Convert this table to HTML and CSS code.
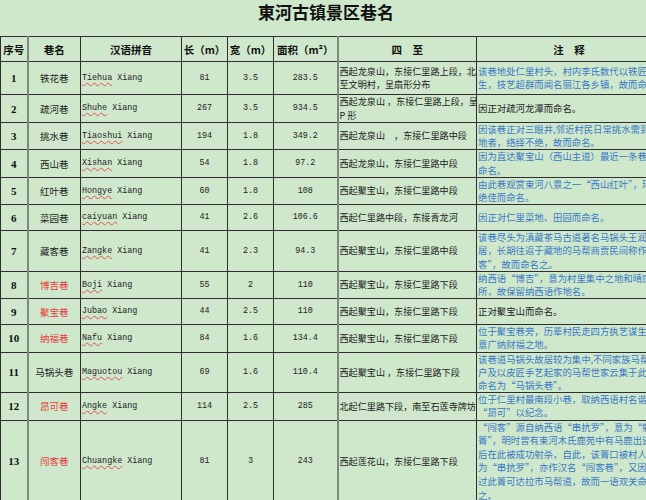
FILE: index.html
```html
<!DOCTYPE html>
<html lang="zh">
<head>
<meta charset="utf-8">
<title>東河古镇景区巷名</title>
<link rel="stylesheet" href="styles.css">
</head>
<body>
<div class="title">東河古镇景区巷名</div>
<table class="sheet">
  <colgroup>
    <col class="c-no"><col class="c-name"><col class="c-py"><col class="c-len"><col class="c-wid"><col class="c-area"><col class="c-bound"><col class="c-note">
  </colgroup>
  <thead>
    <tr class="h26">
      <th>序号</th><th>巷名</th><th>汉语拼音</th><th>长（m）</th><th>宽（m）</th><th>面积（m²）</th><th>四　至</th><th>注　释</th>
    </tr>
  </thead>
  <tbody>
    <tr class="h34">
      <td class="no">1</td><td class="name">铁花巷</td><td class="py"><span class="sp">Tiehua</span> Xiang</td><td class="num">81</td><td class="num">3.5</td><td class="num">283.5</td>
      <td class="bound">西起龙泉山，东接仁里路上段，北<br>至文明村，呈扇形分布</td>
      <td class="note">该巷地处仁里村头，村内李氏数代以铁匠为<br>生，技艺超群而闻名丽江各乡镇，故而命名。</td>
    </tr>
    <tr class="h27">
      <td class="no">2</td><td class="name">疏河巷</td><td class="py"><span class="sp">Shuhe</span> Xiang</td><td class="num">267</td><td class="num">3.5</td><td class="num">934.5</td>
      <td class="bound">西起龙泉山 ，东接仁里路上段，呈<br>P 形</td>
      <td class="note black">因正对疏河龙潭而命名。</td>
    </tr>
    <tr class="h27">
      <td class="no">3</td><td class="name">挑水巷</td><td class="py"><span class="sp">Tiaoshui</span> Xiang</td><td class="num">194</td><td class="num">1.8</td><td class="num">349.2</td>
      <td class="bound">西起龙泉山　，东接仁里路中段</td>
      <td class="note">因该巷正对三眼井,邻近村民日常挑水需到此<br>地者，络绎不绝，故而命名。</td>
    </tr>
    <tr class="h27">
      <td class="no">4</td><td class="name">西山巷</td><td class="py"><span class="sp">Xishan</span> Xiang</td><td class="num">54</td><td class="num">1.8</td><td class="num">97.2</td>
      <td class="bound">西起龙泉山，东接仁里路中段</td>
      <td class="note">因为直达聚宝山（西山主道）最近一条巷子而<br>命名。</td>
    </tr>
    <tr class="h27">
      <td class="no">5</td><td class="name">红叶巷</td><td class="py"><span class="sp">Hongye</span> Xiang</td><td class="num">60</td><td class="num">1.8</td><td class="num">108</td>
      <td class="bound">西起聚宝山，东接仁里路中段</td>
      <td class="note">由此巷观赏束河八景之一“西山红叶”，环境<br>绝佳而命名。</td>
    </tr>
    <tr class="h27">
      <td class="no">6</td><td class="name">菜园巷</td><td class="py"><span class="sp">caiyuan</span> Xiang</td><td class="num">41</td><td class="num">2.6</td><td class="num">106.6</td>
      <td class="bound">西起仁里路中段，东接青龙河</td>
      <td class="note">因正对仁里菜地、田园而命名。</td>
    </tr>
    <tr class="h41">
      <td class="no">7</td><td class="name">藏客巷</td><td class="py"><span class="sp">Zangke</span> Xiang</td><td class="num">41</td><td class="num">2.3</td><td class="num">94.3</td>
      <td class="bound">西起聚宝山，东接仁里路中段</td>
      <td class="note">该巷尽头为滇藏茶马古道著名马锅头王润故<br>居，长期往返于藏地的马帮商贾民间称作“藏<br>客”，故而命名之。</td>
    </tr>
    <tr class="h26">
      <td class="no">8</td><td class="name red">博吉巷</td><td class="py"><span class="sp">Boji</span> Xiang</td><td class="num">55</td><td class="num">2</td><td class="num">110</td>
      <td class="bound">西起聚宝山，东接仁里路下段</td>
      <td class="note">纳西语“博吉”，意为村里集中之地和晴房场<br>所，故保留纳西语作地名。</td>
    </tr>
    <tr class="h27">
      <td class="no">9</td><td class="name red">聚宝巷</td><td class="py"><span class="sp">Jubao</span> Xiang</td><td class="num">44</td><td class="num">2.5</td><td class="num">110</td>
      <td class="bound">西起聚宝山，东接仁里路下段</td>
      <td class="note black">正对聚宝山而命名。</td>
    </tr>
    <tr class="h27">
      <td class="no">10</td><td class="name red">纳福巷</td><td class="py"><span class="sp">Nafu</span> Xiang</td><td class="num">84</td><td class="num">1.6</td><td class="num">134.4</td>
      <td class="bound">西起聚宝山，东接仁里路下段</td>
      <td class="note">位于聚宝巷旁，历辈村民走四方执艺谋生，寓<br>意广纳财福之地。</td>
    </tr>
    <tr class="h41">
      <td class="no">11</td><td class="name">马锅头巷</td><td class="py"><span class="sp">Maguotou</span> Xiang</td><td class="num">69</td><td class="num">1.6</td><td class="num">110.4</td>
      <td class="bound">西起聚宝山 ，东接仁里路下段</td>
      <td class="note">该巷道马锅头故居较为集中,不同家族马帮大<br>户及以皮匠手艺起家的马帮世家云集于此,故<br>命名为“马锅头巷”。</td>
    </tr>
    <tr class="h27">
      <td class="no">12</td><td class="name red">昂可巷</td><td class="py"><span class="sp">Angke</span> Xiang</td><td class="num">114</td><td class="num">2.5</td><td class="num">285</td>
      <td class="bound">北起仁里路下段，南至石莲寺牌坊</td>
      <td class="note">位于仁里村最南段小巷，取纳西语村名谐音<br>“昂可”以纪念。</td>
    </tr>
    <tr class="h82">
      <td class="no">13</td><td class="name red">闯客巷</td><td class="py"><span class="sp">Chuangke</span>  Xiang</td><td class="num">81</td><td class="num">3</td><td class="num">243</td>
      <td class="bound">西起莲花山，东接仁里路下段</td>
      <td class="note tall">“闯客”源自纳西语“串抗罗”，意为“射鹿<br>箐”，明时曾有束河木氏鹿苑中有马鹿出逃<br>后在此被成功射杀，自此，该箐口被村人取名<br>为“串抗罗”，亦作汉名“闯客巷”，又因穿<br>过此箐可达拉市马帮道，故而一语双关命名<br>之。</td>
    </tr>
  </tbody>
</table>
</body>
</html>
```
FILE: styles.css
```css
html, body {
  margin: 0;
  padding: 0;
  overflow: hidden;
}
body {
  background: #cfe8cc;
  width: 646px;
  height: 500px;
  font-family: "Noto Sans CJK SC", sans-serif;
  color: #1a1a1a;
}
.title {
  width: 652px;
  height: 36px;
  line-height: 27px;
  text-align: center;
  font-size: 17px;
  font-weight: bold;
  color: #111;
  font-family: "Liberation Serif", "Noto Sans CJK SC", serif;
}
.sheet {
  border-collapse: collapse;
  table-layout: fixed;
  width: 661px;
  border-left: 1px solid #333;
}
.c-no { width: 27px; }
.c-name { width: 53px; }
.c-py { width: 101px; }
.c-len { width: 46px; }
.c-wid { width: 46px; }
.c-area { width: 64px; }
.c-bound { width: 139px; }
.c-note { width: 185px; }

.sheet th, .sheet td {
  border: 1px solid #2e2e2e;
  padding: 0 1px;
  vertical-align: middle;
  overflow: hidden;
  white-space: nowrap;
}
.sheet th:nth-child(1), .sheet td:nth-child(1),
.sheet th:nth-child(6), .sheet td:nth-child(6) {
  border-right: 2px solid #7d897b;
}
.sheet th {
  font-size: 10.5px;
  font-weight: bold;
  text-align: center;
  color: #111;
  line-height: 13px;
}
.h26 { height: 25px; }
.h27 { height: 26px; }
.h34 { height: 33px; }
.h41 { height: 40px; }
.h82 { height: 82px; }

.no {
  font-family: "Liberation Serif", serif;
  font-weight: bold;
  font-size: 11px;
  line-height: 12px;
  text-align: center;
  color: #111;
}
.name {
  font-size: 9.5px;
  line-height: 12px;
  text-align: center;
  color: #222;
}
.red { color: #e8383a; }
.py, .num {
  font-family: "Liberation Mono", monospace;
  font-size: 8.4px;
  line-height: 11px;
  color: #222;
  white-space: pre;
}
.py { text-align: left; }
.num { text-align: center; }
.sp {
  text-decoration: underline wavy #e05050;
  text-decoration-thickness: 1px;
  text-underline-offset: 2px;
}
.bound {
  font-size: 9.1px;
  line-height: 13.5px;
  color: #222;
  text-align: left;
}
.note {
  font-size: 9.4px;
  line-height: 13.2px;
  color: #3a78c6;
  text-align: left;
}
.note.black { color: #222; }
.note.tall { line-height: 13.6px; }
```
